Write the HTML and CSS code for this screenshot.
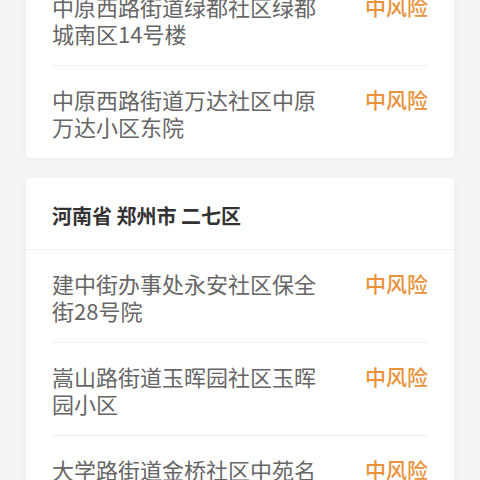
FILE: index.html
```html
<!DOCTYPE html>
<html lang="zh-CN">
<head>
    <meta charset="UTF-8">
    <title>中风险地区</title>
    <meta name="viewport" content="width=device-width, initial-scale=1.0">
    <link rel="stylesheet" href="styles.css">
</head>
<body>
<div class="lista">
    <!-- tarjeta anterior, ya desplazada hacia arriba -->
    <div class="card">
        <div class="row">
            <span class="addr">中原西路街道绿都社区绿都城南区14号楼</span>
            <span class="risk">中风险</span>
        </div>
        <div class="row">
            <span class="addr">中原西路街道万达社区中原万达小区东院</span>
            <span class="risk">中风险</span>
        </div>
    </div>

    <div class="card">
        <h2 class="area">河南省 郑州市 二七区</h2>
        <div class="row">
            <span class="addr">建中街办事处永安社区保全街28号院</span>
            <span class="risk">中风险</span>
        </div>
        <div class="row">
            <span class="addr">嵩山路街道玉晖园社区玉晖园小区</span>
            <span class="risk">中风险</span>
        </div>
        <div class="row">
            <span class="addr">大学路街道金桥社区中苑名苑小区</span>
            <span class="risk">中风险</span>
        </div>
    </div>
</div>
</body>
</html>
```

FILE: styles.css
```css
* {
    box-sizing: border-box;
}

body {
    background-color: #f5f5f5;
    font-family: "Noto Sans CJK SC", "Noto Sans", sans-serif;
    margin: 0;
    padding: 0 26px;
}

.lista {
    margin-top: -27px;
    display: flex;
    flex-direction: column;
    gap: 20px;
}

.card {
    background-color: #fff;
    border-radius: 4px;
    box-shadow: 0 1px 6px rgba(0, 0, 0, 0.04);
}

.area {
    margin: 0;
    padding: 24px 26px 19px;
    font-size: 20px;
    line-height: 28px;
    font-weight: bold;
    color: #333;
    border-bottom: 1px solid #f0f0f0;
}

.row {
    display: flex;
    justify-content: space-between;
    align-items: flex-start;
    margin: 0 26px;
    padding: 20px 0 18px;
    border-bottom: 1px solid #f0f0f0;
}

.row:last-child {
    border-bottom: none;
}

.addr {
    width: 266px;
    font-size: 22px;
    line-height: 27px;
    color: #666;
}

.risk {
    font-size: 21px;
    line-height: 27px;
    font-weight: 500;
    color: #e9923a;
}
```
